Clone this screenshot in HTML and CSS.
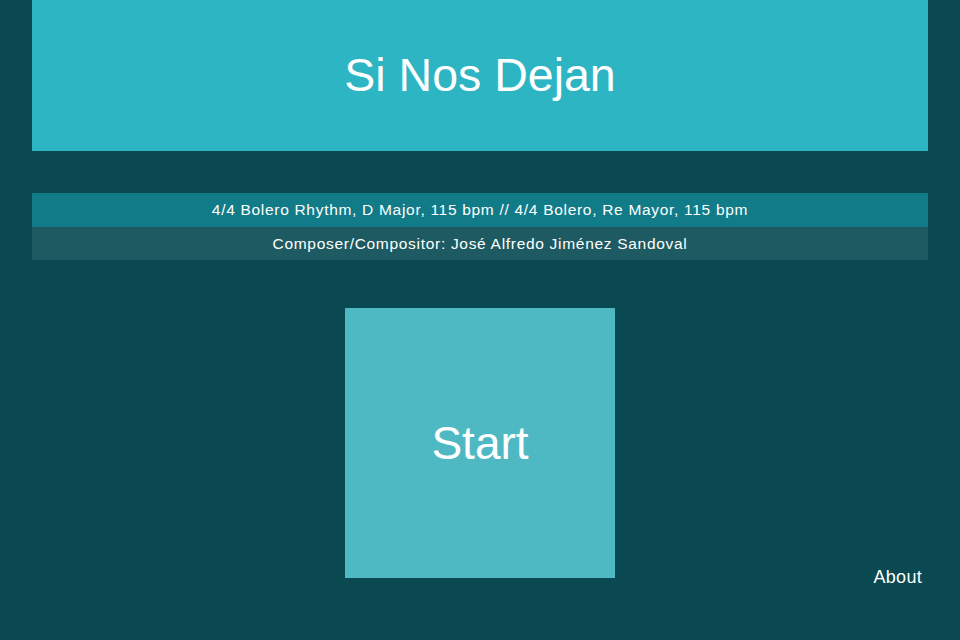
FILE: index.html
```html
<!DOCTYPE html>
<html>
<head>
<meta charset="utf-8">
<link rel="stylesheet" href="styles.css">
</head>
<body>
<div class="page">
  <header class="title-bar"><h1 class="title">Si Nos Dejan</h1></header>
  <section class="info">
    <div class="info-row rhythm">4/4 Bolero Rhythm, D Major, 115 bpm // 4/4 Bolero, Re Mayor, 115 bpm</div>
    <div class="info-row composer">Composer/Compositor: José Alfredo Jiménez Sandoval</div>
  </section>
  <main class="stage">
    <button class="start">Start</button>
  </main>
  <a class="about">About</a>
</div>
</body>
</html>
```
FILE: styles.css
```css
html, body {
  margin: 0;
  padding: 0;
  background: #0a4951;
  width: 960px;
  height: 640px;
  overflow: hidden;
}
.page {
  position: relative;
  width: 960px;
  height: 640px;
  font-family: "Liberation Sans", Arial, sans-serif;
  color: #ffffff;
  display: flex;
  flex-direction: column;
  align-items: center;
}
.title-bar {
  width: 896px;
  height: 151px;
  background: #2eb5c3;
  display: flex;
  align-items: center;
  justify-content: center;
}
.title {
  margin: 0;
  font-weight: normal;
  font-size: 46.5px;
  line-height: 1;
}
.info {
  width: 896px;
  margin-top: 42px;
  display: flex;
  flex-direction: column;
}
.info-row {
  display: flex;
  align-items: center;
  justify-content: center;
  font-size: 15.5px;
  letter-spacing: 0.7px;
}
.rhythm {
  height: 34px;
  background: #117b88;
}
.composer {
  height: 33px;
  background: #1d5a61;
}
.stage {
  margin-top: 48px;
  display: flex;
  justify-content: center;
}
.start {
  width: 270px;
  height: 270px;
  border: none;
  background: #4fb9c3;
  color: #ffffff;
  font-family: "Liberation Sans", Arial, sans-serif;
  font-size: 46px;
  padding: 0;
  margin: 0;
}
.about {
  position: absolute;
  right: 38px;
  top: 566px;
  font-size: 18px;
  line-height: 22px;
  letter-spacing: 0.3px;
}
```
